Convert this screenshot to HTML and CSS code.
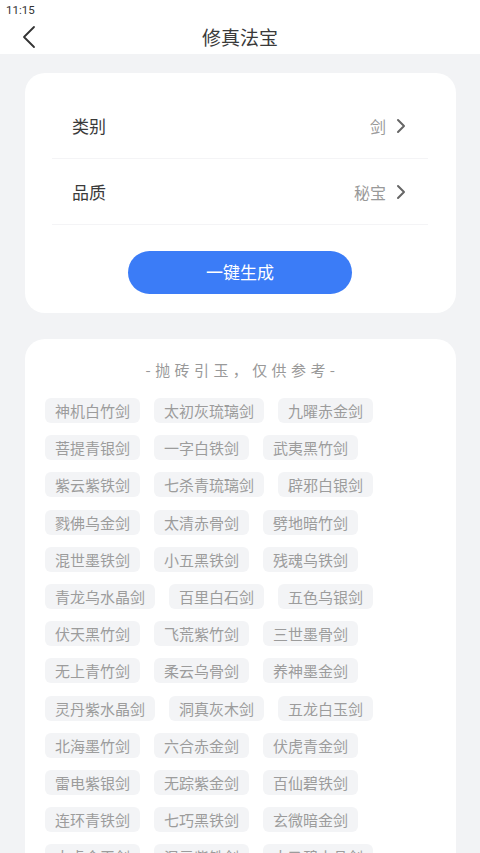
FILE: index.html
```html
<!DOCTYPE html>
<html lang="zh-CN">
<head>
<meta charset="utf-8">
<title>修真法宝</title>
<link rel="stylesheet" href="styles.css">
</head>
<body>
<div class="top">
  <div class="status">11:15</div>
  <div class="navbar">
    <svg class="back" width="16" height="24" viewBox="0 0 16 24"><path d="M13 2 L3 12 L13 22" fill="none" stroke="#333" stroke-width="1.8" stroke-linecap="round" stroke-linejoin="round"/></svg>
    <div class="title">修真法宝</div>
  </div>
</div>
<div class="main">
  <div class="card form">
    <div class="row">
      <span class="label">类别</span>
      <span class="value">剑<svg class="chev" width="10" height="16" viewBox="0 0 10 16"><path d="M2 2 L8 8 L2 14" fill="none" stroke="#666" stroke-width="2" stroke-linecap="round" stroke-linejoin="round"/></svg></span>
    </div>
    <div class="row">
      <span class="label">品质</span>
      <span class="value">秘宝<svg class="chev" width="10" height="16" viewBox="0 0 10 16"><path d="M2 2 L8 8 L2 14" fill="none" stroke="#666" stroke-width="2" stroke-linecap="round" stroke-linejoin="round"/></svg></span>
    </div>
    <button class="gen">一键生成</button>
  </div>
  <div class="card list">
    <div class="hint">-抛砖引玉，仅供参考-</div>
    <div class="tags">
      <span class="tag">神机白竹剑</span><span class="tag">太初灰琉璃剑</span><span class="tag">九曜赤金剑</span>
      <span class="tag">菩提青银剑</span><span class="tag">一字白铁剑</span><span class="tag">武夷黑竹剑</span>
      <span class="tag">紫云紫铁剑</span><span class="tag">七杀青琉璃剑</span><span class="tag">辟邪白银剑</span>
      <span class="tag">戮佛乌金剑</span><span class="tag">太清赤骨剑</span><span class="tag">劈地暗竹剑</span>
      <span class="tag">混世墨铁剑</span><span class="tag">小五黑铁剑</span><span class="tag">残魂乌铁剑</span>
      <span class="tag">青龙乌水晶剑</span><span class="tag">百里白石剑</span><span class="tag">五色乌银剑</span>
      <span class="tag">伏天黑竹剑</span><span class="tag">飞荒紫竹剑</span><span class="tag">三世墨骨剑</span>
      <span class="tag">无上青竹剑</span><span class="tag">柔云乌骨剑</span><span class="tag">养神墨金剑</span>
      <span class="tag">灵丹紫水晶剑</span><span class="tag">洞真灰木剑</span><span class="tag">五龙白玉剑</span>
      <span class="tag">北海墨竹剑</span><span class="tag">六合赤金剑</span><span class="tag">伏虎青金剑</span>
      <span class="tag">雷电紫银剑</span><span class="tag">无踪紫金剑</span><span class="tag">百仙碧铁剑</span>
      <span class="tag">连环青铁剑</span><span class="tag">七巧黑铁剑</span><span class="tag">玄微暗金剑</span>
      <span class="tag">太虚金玉剑</span><span class="tag">混元紫铁剑</span><span class="tag">太乙碧水晶剑</span>
    </div>
  </div>
</div>
</body>
</html>
```

FILE: styles.css
```css
* { box-sizing: border-box; }
html, body { margin: 0; padding: 0; }
body {
  width: 480px;
  height: 853px;
  overflow: hidden;
  background: #f2f3f5;
  font-family: "Noto Sans CJK SC", "Noto Sans", Roboto, sans-serif;
  color: #333;
}
.top { background: #fff; }
.status {
  height: 20px;
  line-height: 20px;
  padding-left: 6px;
  font-family: Roboto, "Noto Sans", sans-serif;
  font-size: 11.5px;
  color: #333;
}
.navbar {
  position: relative;
  height: 34px;
  display: flex;
  align-items: center;
  justify-content: center;
}
.back {
  position: absolute;
  left: 21px;
  top: 5px;
}
.title {
  font-size: 19px;
  color: #3a3a3a;
  line-height: 34px;
}
.main {
  padding: 19px 24px 0 25px;
}
.card {
  background: #fff;
  border-radius: 20px;
}
.form {
  padding: 20px 28px 19px 27px;
}
.row {
  height: 66px;
  border-bottom: 1px solid #f4f4f6;
  display: flex;
  align-items: center;
  justify-content: space-between;
  padding: 0 22px 0 20px;
}
.label {
  font-size: 17px;
  color: #3a3a3a;
}
.value {
  display: flex;
  align-items: center;
  font-size: 16px;
  color: #999;
}
.chev { margin-left: 10px; }
.gen {
  display: block;
  margin: 26px auto 0;
  width: 224px;
  height: 43px;
  border: none;
  border-radius: 22px;
  background: #3b7cf7;
  color: #fff;
  font-family: "Noto Sans CJK SC", sans-serif;
  font-size: 17px;
  padding: 0 0 2px;
}
.list {
  margin-top: 26px;
  padding: 20px 20px 20px 20px;
}
.hint {
  text-align: center;
  font-size: 15px;
  line-height: 22px;
  color: #999;
  letter-spacing: 4.4px;
  padding-left: 4px;
}
.tags {
  margin-top: 17px;
  display: flex;
  flex-wrap: wrap;
  column-gap: 14px;
  row-gap: 12.2px;
}
.tag {
  height: 25px;
  line-height: 25px;
  padding: 0 10px;
  border-radius: 6px;
  background: #f3f4f6;
  color: #9c9c9c;
  font-size: 15px;
  white-space: nowrap;
}
```
